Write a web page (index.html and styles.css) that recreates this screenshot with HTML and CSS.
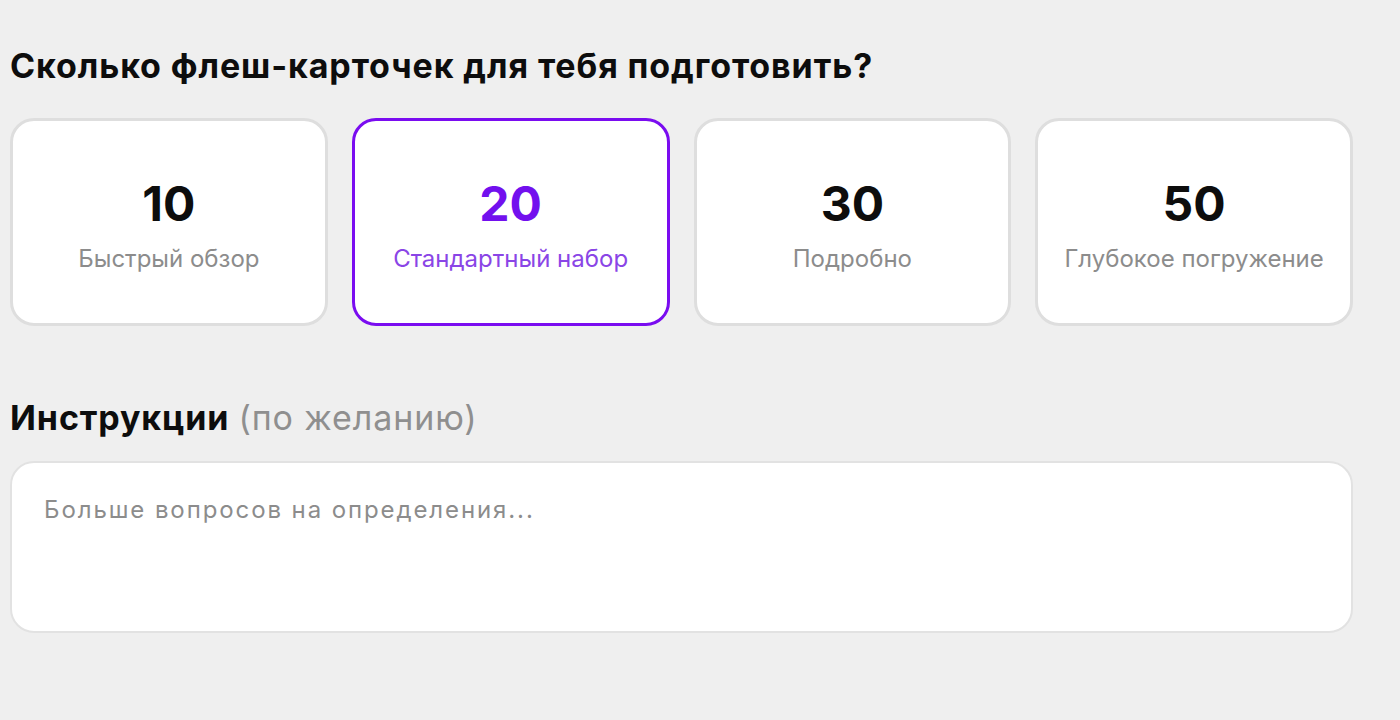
FILE: index.html
```html
<!DOCTYPE html>
<html lang="ru">
<head>
<meta charset="utf-8">
<title>Флеш-карточки</title>
<link rel="stylesheet" href="styles.css">
</head>
<body>
<main class="page">
  <h2 class="section-title">Сколько флеш-карточек для тебя подготовить?</h2>
  <div class="options">
    <button class="option" type="button">
      <span class="option-num">10</span>
      <span class="option-label">Быстрый обзор</span>
    </button>
    <button class="option option--active" type="button">
      <span class="option-num">20</span>
      <span class="option-label">Стандартный набор</span>
    </button>
    <button class="option" type="button">
      <span class="option-num">30</span>
      <span class="option-label">Подробно</span>
    </button>
    <button class="option" type="button">
      <span class="option-num">50</span>
      <span class="option-label">Глубокое погружение</span>
    </button>
  </div>
  <h2 class="section-title section-title--second">Инструкции <span class="optional">(по желанию)</span></h2>
  <textarea class="instructions" placeholder="Больше вопросов на определения..."></textarea>
</main>
</body>
</html>
```
FILE: styles.css
```css
html, body {
  margin: 0;
  padding: 0;
  background: #efefef;
}
body {
  font-family: Inter, "Noto Sans", sans-serif;
  color: #0d0d0d;
}
.page {
  width: 1343px;
  padding: 43px 0 0 10px;
  display: flex;
  flex-direction: column;
}
.section-title {
  margin: 0;
  font-size: 34px;
  line-height: 46px;
  font-weight: 700;
  letter-spacing: 0.9px;
}
.section-title--second {
  margin-top: 69px;
}
.optional {
  font-weight: 400;
  color: #8f8f8f;
}
.options {
  margin-top: 29px;
  display: grid;
  grid-template-columns: repeat(4, 1fr);
  gap: 24px;
}
.option {
  height: 208px;
  box-sizing: border-box;
  background: #fff;
  border: 3px solid #dedede;
  border-radius: 24px;
  display: flex;
  flex-direction: column;
  align-items: center;
  justify-content: center;
  gap: 16px;
  font-family: inherit;
  padding: 7px 0 0;
  cursor: pointer;
}
.option-num {
  font-size: 48px;
  line-height: 50px;
  font-weight: 700;
  color: #0d0d0d;
}
.option-label {
  font-size: 24px;
  line-height: 28px;
  color: #8c8c8c;
}
.option--active {
  border-color: #7a0cf0;
}
.option--active .option-num {
  color: #7210ee;
}
.option--active .option-label {
  color: #8a45e6;
}
.instructions {
  margin-top: 20px;
  height: 172px;
  box-sizing: border-box;
  border: 2px solid #e2e2e2;
  border-radius: 24px;
  background: #fff;
  padding: 32px 32px;
  font-family: inherit;
  font-size: 24px;
  line-height: 30px;
  letter-spacing: 1.9px;
  resize: none;
  outline: none;
}
.instructions::placeholder {
  color: #8c8c8c;
}
```
